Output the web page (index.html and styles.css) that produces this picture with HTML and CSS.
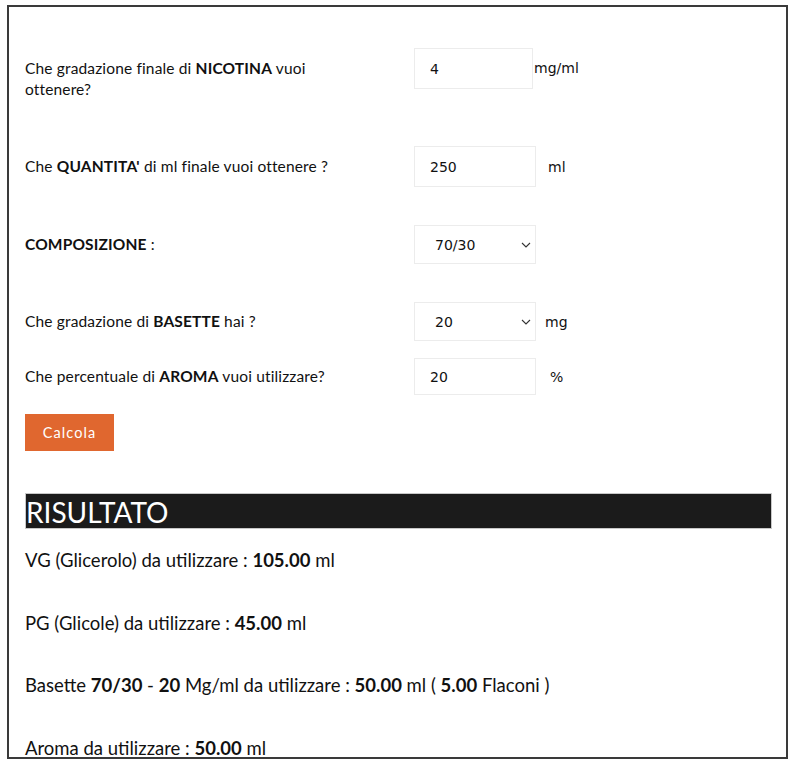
FILE: index.html
```html
<!DOCTYPE html>
<html lang="it">
<head>
<meta charset="utf-8">
<title>Calcolatore</title>
<link rel="stylesheet" href="styles.css">
</head>
<body>
<div class="frame">
  <form class="calc">
    <div class="row row-1">
      <label class="label">Che gradazione finale di <b>NICOTINA</b> vuoi ottenere?</label>
      <div class="control">
        <input class="field w119" type="text" value="4">
        <span class="unit u-tight">mg/ml</span>
      </div>
    </div>
    <div class="row row-2">
      <label class="label">Che <b>QUANTITA'</b> di ml finale vuoi ottenere ?</label>
      <div class="control">
        <input class="field w122" type="text" value="250">
        <span class="unit u-ml">ml</span>
      </div>
    </div>
    <div class="row row-3">
      <label class="label"><b>COMPOSIZIONE</b> :</label>
      <div class="control">
        <div class="select-wrap">
          <select class="select"><option>70/30</option></select>
          <svg class="chev" width="10" height="6" viewBox="0 0 10 6"><path d="M1 1 L5 5 L9 1" fill="none" stroke="#333" stroke-width="1.1"/></svg>
        </div>
      </div>
    </div>
    <div class="row row-4">
      <label class="label">Che gradazione di <b>BASETTE</b> hai ?</label>
      <div class="control">
        <div class="select-wrap">
          <select class="select"><option>20</option></select>
          <svg class="chev" width="10" height="6" viewBox="0 0 10 6"><path d="M1 1 L5 5 L9 1" fill="none" stroke="#333" stroke-width="1.1"/></svg>
        </div>
        <span class="unit u-mg">mg</span>
      </div>
    </div>
    <div class="row row-5">
      <label class="label">Che percentuale di <b>AROMA</b> vuoi utilizzare?</label>
      <div class="control">
        <input class="field w122 short" type="text" value="20">
        <span class="unit u-pct">%</span>
      </div>
    </div>
    <button class="btn" type="button">Calcola</button>
  </form>

  <h2 class="result-title">RISULTATO</h2>
  <p class="result">VG (Glicerolo) da utilizzare : <b>105.00</b> ml</p>
  <p class="result">PG (Glicole) da utilizzare : <b>45.00</b> ml</p>
  <p class="result">Basette <b>70/30</b> - <b>20</b> Mg/ml da utilizzare : <b>50.00</b> ml ( <b>5.00</b> Flaconi )</p>
  <p class="result">Aroma da utilizzare : <b>50.00</b> ml</p>
</div>
</body>
</html>
```

FILE: styles.css
```css
* { box-sizing: border-box; }
html, body { margin: 0; padding: 0; background: #fff; }
body {
  font-family: "Lato", "Open Sans", sans-serif;
  color: #111;
}
.frame {
  margin: 5px 7px 0 7px;
  height: 754px;
  border: 2px solid #3a3a3a;
  padding: 0 14px 0 16px;
  overflow: hidden;
}
.calc { padding-top: 41px; }
.row {
  display: flex;
  align-items: flex-start;
}
.label {
  width: 389px;
  flex: none;
  font-size: 15.5px;
  line-height: 21px;
  letter-spacing: 0.15px;
  padding: 10px 60px 0 0;
  color: #111;
}
.label b { font-weight: 700; }
.row-2 { margin-top: 46px; }
.row-3 { margin-top: 38px; }
.row-4 { margin-top: 38px; }
.row-5 { margin-top: 17px; }
.row-3 .label, .row-4 .label { padding-top: 9px; }
.row-5 .label { padding-top: 8px; }
.control {
  display: flex;
  align-items: center;
}
.field {
  height: 41px;
  border: 1px solid #ececec;
  background: #fff;
  font-family: "DejaVu Sans", sans-serif;
  font-size: 14px;
  color: #111;
  padding: 0 15px;
  outline: none;
}
.field.short { height: 37px; }
.w119 { width: 119px; }
.w122 { width: 122px; }
.unit {
  font-family: "DejaVu Sans", sans-serif;
  font-size: 14px;
  color: #111;
}
.u-tight { margin-left: 1px; margin-top: -2px; }
.u-ml { margin-left: 12px; }
.u-mg { margin-left: 9px; }
.u-pct { margin-left: 14px; }
.select-wrap {
  position: relative;
  width: 122px;
  height: 39px;
}
.select {
  -webkit-appearance: none;
  appearance: none;
  width: 100%;
  height: 100%;
  border: 1px solid #ececec;
  background: #fff;
  font-family: "DejaVu Sans", sans-serif;
  font-size: 14px;
  color: #111;
  padding: 0 20px;
  border-radius: 0;
  outline: none;
}
.chev {
  position: absolute;
  right: 5px;
  top: 17px;
  pointer-events: none;
}
.btn {
  display: block;
  margin-top: 19px;
  width: 89px;
  height: 37px;
  border: none;
  background: #e0672f;
  color: #fff;
  font-family: "Lato", sans-serif;
  font-size: 14.5px;
  letter-spacing: 1.1px;
  padding: 0;
}
.result-title {
  margin: 42px 0 0 0;
  height: 36px;
  background: #1b1b1b;
  border: 1px solid #c8c8c8;
  color: #fff;
  font-family: "Lato", sans-serif;
  font-weight: 400;
  font-size: 28px;
  line-height: 36px;
  padding: 0;
}
.result {
  margin: 0;
  font-size: 18.5px;
  line-height: 22px;
  color: #111;
}
.result:nth-of-type(1) { margin-top: 20px; }
.result + .result { margin-top: 40.5px; }
.result b { font-weight: 700; }
```
